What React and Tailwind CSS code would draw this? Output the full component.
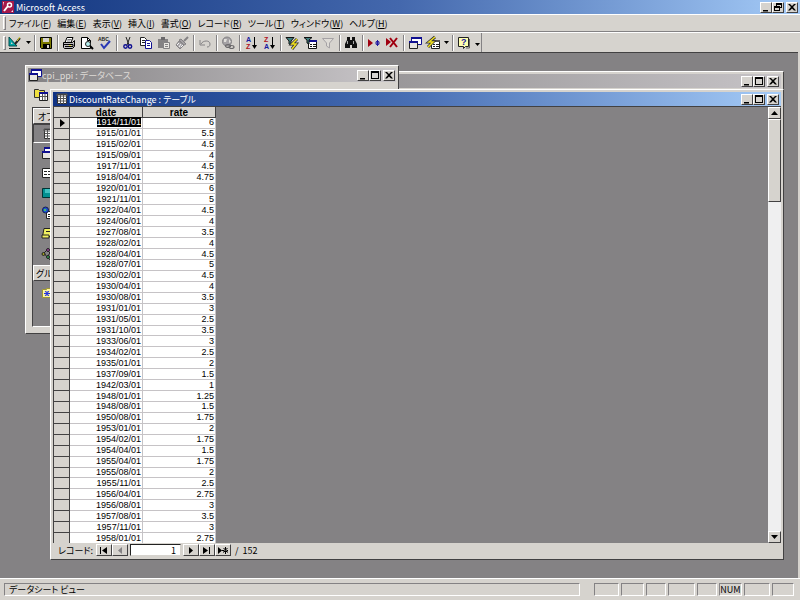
import React, { useState } from "react";

const rows = [
  ["1914/11/01", 6], ["1915/01/01", 5.5], ["1915/02/01", 4.5], ["1915/09/01", 4],
  ["1917/11/01", 4.5], ["1918/04/01", 4.75], ["1920/01/01", 6], ["1921/11/01", 5],
  ["1922/04/01", 4.5], ["1924/06/01", 4], ["1927/08/01", 3.5], ["1928/02/01", 4],
  ["1928/04/01", 4.5], ["1928/07/01", 5], ["1930/02/01", 4.5], ["1930/04/01", 4],
  ["1930/08/01", 3.5], ["1931/01/01", 3], ["1931/05/01", 2.5], ["1931/10/01", 3.5],
  ["1933/06/01", 3], ["1934/02/01", 2.5], ["1935/01/01", 2], ["1937/09/01", 1.5],
  ["1942/03/01", 1], ["1948/01/01", 1.25], ["1948/08/01", 1.5], ["1950/08/01", 1.75],
  ["1953/01/01", 2], ["1954/02/01", 1.75], ["1954/04/01", 1.5], ["1955/04/01", 1.75],
  ["1955/08/01", 2], ["1955/11/01", 2.5], ["1956/04/01", 2.75], ["1956/08/01", 3],
  ["1957/08/01", 3.5], ["1957/11/01", 3], ["1958/01/01", 2.75],
];

const menus = [
  ["ファイル", "F"], ["編集", "E"], ["表示", "V"], ["挿入", "I"], ["書式", "O"],
  ["レコード", "R"], ["ツール", "T"], ["ウィンドウ", "W"], ["ヘルプ", "H"],
];

const Icon = ({ children }) => (
  <svg viewBox="0 0 14 14" className="w-3.5 h-3.5 shrink-0 overflow-visible" fill="none" aria-hidden="true">
    {children}
  </svg>
);

const Letter = ({ x, y, size = 7, fill, children }) => (
  <text x={x} y={y} fontSize={size} fontWeight="bold" fontFamily="Liberation Sans, sans-serif" fill={fill}>
    {children}
  </text>
);

const icons = {
  design: (
    <Icon>
      <path d="M1 1v9h8z" fill="#00a5a5" stroke="#004a4a" />
      <path d="M3 6v2h2z" fill="#d6d3ce" />
      <path d="M12 2 7 8" stroke="#222" strokeWidth="2" />
      <path d="M12 1 9 5" stroke="#e8e030" />
      <path d="M1 12.5h11" stroke="#222" />
    </Icon>
  ),
  save: (
    <Icon>
      <path d="M1.5 1.5h11v11h-10l-1-1z" fill="#7b7900" stroke="#000" />
      <path d="M4 2h6v4H4z" fill="#d6d3ce" />
      <path d="M4 8h7v4H4z" fill="#000" />
      <path d="M8 9h2v3H8z" fill="#d6d3ce" />
    </Icon>
  ),
  print: (
    <Icon>
      <path d="M5 1.5h6l-2 5H3z" fill="#fff" stroke="#000" />
      <path d="M5.5 3.5h4M5 5h3.5" stroke="#777" />
      <path d="M1.5 6.5h9l2-2v6l-2 2h-8l-1-1z" fill="#bdbabd" stroke="#000" />
      <path d="M2 8.5h9v2H3" stroke="#000" />
      <path d="M7 9.5h2" stroke="#e8e030" />
    </Icon>
  ),
  preview: (
    <Icon>
      <path d="M1.5 1.5h6l3 3v8h-9z" fill="#fff" stroke="#000" />
      <path d="M7.5 1.5v3h3" stroke="#000" />
      <circle cx="8" cy="8" r="2.5" fill="#b8f0f0" stroke="#222" />
      <path d="m10 10 3 3" stroke="#000" strokeWidth="2" />
    </Icon>
  ),
  spell: (
    <Icon>
      <Letter x="0" y="5" size={5} fill="#222">ABC</Letter>
      <path d="m3 8 3 4 6-7" stroke="#2938b5" strokeWidth="2" />
    </Icon>
  ),
  cut: (
    <Icon>
      <path d="m5 1 3 8M9 1 6 9" stroke="#222" />
      <circle cx="4.5" cy="10.5" r="1.7" stroke="#101090" strokeWidth="1.4" />
      <circle cx="9" cy="10.5" r="1.7" stroke="#101090" strokeWidth="1.4" />
    </Icon>
  ),
  copy: (
    <Icon>
      <path d="M1.5 1.5h4l2 2v6h-6z" fill="#fff" stroke="#222" />
      <path d="M3 4.5h3M3 6.5h3" stroke="#222" />
      <path d="M6.5 4.5h4l2 2v6h-6z" fill="#fff" stroke="#101090" />
      <path d="M8 7.5h3M8 9.5h3" stroke="#101090" />
    </Icon>
  ),
  paste: (
    <Icon>
      <path d="M1 3h10v9H1z" fill="#848284" />
      <path d="M4 1h4v3H4z" fill="#6b696b" />
      <path d="M6.5 6.5h6v6h-6z" fill="#e8e6e2" stroke="#848284" />
      <path d="M8 8.5h3M8 10.5h3" stroke="#848284" />
    </Icon>
  ),
  brush: (
    <Icon>
      <path d="m13 1-4 4" stroke="#848284" strokeWidth="2" />
      <path d="m6 3 5 5-2 1-5-5z" fill="#a5a2a5" stroke="#848284" />
      <path d="M4 5 1 9l4 4 4-4z" fill="#a5a2a5" stroke="#848284" />
      <path d="m4 7-2 2m4-1-2 3m4-2-2 2" stroke="#f7f7f7" />
    </Icon>
  ),
  undo: (
    <Icon>
      <path d="M2 4v5h5M3 8c2-4 9-4 9 0 0 2-1 3-3 3" stroke="#848284" />
    </Icon>
  ),
  globe: (
    <Icon>
      <circle cx="6" cy="5.5" r="4.5" fill="#a5a2a5" stroke="#848284" />
      <path d="M3 3h3l-1 3H3zm5 0 2 3-2 1z" fill="#e0deda" />
      <ellipse cx="7" cy="10" rx="2.5" ry="1.5" stroke="#6b696b" strokeWidth="1.2" />
      <ellipse cx="10.5" cy="11" rx="2.5" ry="1.5" stroke="#6b696b" strokeWidth="1.2" />
    </Icon>
  ),
  sortAsc: (
    <Icon>
      <Letter x="2" y="6" fill="#1818a0">A</Letter>
      <Letter x="2" y="13" fill="#b01020">Z</Letter>
      <path d="M10.5 1v11" stroke="#000" />
      <path d="M8 9h5l-2.5 4z" fill="#000" />
    </Icon>
  ),
  sortDesc: (
    <Icon>
      <Letter x="2" y="6" fill="#b01020">Z</Letter>
      <Letter x="2" y="13" fill="#1818a0">A</Letter>
      <path d="M10.5 1v11" stroke="#000" />
      <path d="M8 9h5l-2.5 4z" fill="#000" />
    </Icon>
  ),
  filterSel: (
    <Icon>
      <path d="M1 1.5h8L6 5v4L4 8V5z" fill="#408080" stroke="#111" />
      <path d="m12 3-5 5h4l-4 5" stroke="#333" strokeWidth="3" />
      <path d="m12 3-5 5h4l-4 5" stroke="#f0e020" strokeWidth="1.5" />
    </Icon>
  ),
  filterForm: (
    <Icon>
      <path d="M5.5 4.5h8v8h-8z" fill="#fff" stroke="#111" />
      <path d="M5 4h9v2H5z" fill="#101090" />
      <path d="M7 8.5h2m1 0h3M7 10.5h2m1 0h3" stroke="#111" />
      <path d="M1 1.5h8L6 4v4L4 7V4z" fill="#408080" stroke="#111" />
    </Icon>
  ),
  filter: (
    <Icon>
      <path d="M1.5 2.5h11L8.5 7v5l-3-2V7z" fill="#dedbd6" stroke="#a5a2a5" />
    </Icon>
  ),
  find: (
    <Icon>
      <path d="M3 1h3v3h2V1h3v3l2 4v4H8V9H6v3H1V8l2-4z" fill="#111" />
      <path d="M3.5 5v3M9.5 5v3" stroke="#aaa" />
    </Icon>
  ),
  newRec: (
    <Icon>
      <path d="M1 3v8l5-4z" fill="#a00010" />
      <path d="M10.5 4v6M8 7h5M9 5l3 4M12 5 9 9" stroke="#2018a0" />
    </Icon>
  ),
  delRec: (
    <Icon>
      <path d="M1 2v8l5-4z" fill="#a00010" />
      <path d="m5 2 7 9M12 2l-7 9" stroke="#a00010" strokeWidth="2" />
    </Icon>
  ),
  dbWindow: (
    <Icon>
      <path d="M3.5 1.5h10v7h-10z" fill="#fff" stroke="#101090" />
      <path d="M3 1h11v2H3z" fill="#101090" />
      <path d="M1.5 5.5h8v7h-8z" fill="#e8e6e2" stroke="#222" />
      <path d="M1 5h9v2H1z" fill="#101090" />
    </Icon>
  ),
  newObj: (
    <Icon>
      <path d="M5.5 4.5h8v8h-8z" fill="#fff" stroke="#222" />
      <path d="M5 4h9v2H5z" fill="#555" />
      <path d="M7 8.5h2m1 0h3M7 10.5h2m1 0h3" stroke="#222" />
      <path d="M9 1 3 6h4l-5 5" stroke="#333" strokeWidth="3" />
      <path d="M9 1 3 6h4l-5 5" stroke="#f0e020" strokeWidth="1.5" />
    </Icon>
  ),
  help: (
    <Icon>
      <path d="M1.5 1.5h10v9h-3l-2 2v-2h-5z" fill="#ffffb0" stroke="#222" />
      <path d="M12.5 3v9H9" stroke="#666" />
      <Letter x="4" y="9" size={9} fill="#1818a0">?</Letter>
    </Icon>
  ),
  table: (
    <Icon>
      <path d="M2.5 2.5h9v9h-9z" fill="#fff" stroke="#333" />
      <path d="M2 2h10v2H2zM5.5 3v9M8.5 3v9M3 6.5h9M3 9h9" stroke="#555" />
    </Icon>
  ),
  form: (
    <Icon>
      <path d="M1.5 2.5h11v9h-11z" fill="#fff" stroke="#222" />
      <path d="M3 5.5h3M3 8.5h3m1-3h5m-5 3h5" stroke="#222" />
    </Icon>
  ),
  report: (
    <Icon>
      <path d="M1.5 2.5h11v9h-11z" fill="#009090" stroke="#033" />
      <path d="M4 3h7v4H4z" fill="#40c0c0" />
    </Icon>
  ),
  page: (
    <Icon>
      <path d="M5.5 5.5h7v7h-7z" fill="#fff" stroke="#222" />
      <circle cx="4.5" cy="4" r="3" fill="#2050d0" stroke="#102050" />
      <path d="M3 3h2v2H3z" fill="#40c060" />
      <path d="M7 8.5h4M7 10.5h4" stroke="#222" />
    </Icon>
  ),
  macro: (
    <Icon>
      <path d="M3 2.5h10l-3 8H1.5z" fill="#f0f060" stroke="#222" />
      <path d="M1 9h7v3H1z" fill="#f0f060" stroke="#222" />
      <path d="M5 5.5h6" stroke="#222" />
    </Icon>
  ),
  module: (
    <Icon>
      <path d="m3 6 3-3 3 3-3 4zM6 9l3 4 4-4" stroke="#222" />
      <circle cx="2.5" cy="7" r="1.5" fill="#a0a020" stroke="#222" />
      <circle cx="7" cy="3" r="1.5" fill="#a040a0" stroke="#222" />
      <circle cx="7" cy="10" r="1.5" fill="#30a050" stroke="#222" />
    </Icon>
  ),
  favorites: (
    <Icon>
      <path d="M1.5 3.5h4v-1h4v1h4v8h-12z" fill="#fff7a0" stroke="#a09830" />
      <path d="M6 5v5M3 7.5h6M4 5l4 5m0-5-4 5" stroke="#2030e0" />
    </Icon>
  ),
  open: (
    <Icon>
      <path d="M0.5 2.5h4l1 1h5v7h-10z" fill="#f0e040" stroke="#333" />
      <path d="M5.5 5.5h8v8h-8z" fill="#fff" stroke="#222" />
      <path d="M5 5h9v2H5z" fill="#101090" />
      <path d="M8.5 7v6M11 7v6M6 9.5h7" stroke="#555" />
    </Icon>
  ),
};

const toolGroups = [
  [["save", "上書き保存"]],
  [["print", "印刷"], ["preview", "印刷プレビュー"], ["spell", "スペル チェック"]],
  [["cut", "切り取り"], ["copy", "コピー"], ["paste", "貼り付け"], ["brush", "書式のコピー"]],
  [["undo", "元に戻す"]],
  [["globe", "ハイパーリンクの挿入"]],
  [["sortAsc", "昇順で並べ替え"], ["sortDesc", "降順で並べ替え"]],
  [["filterSel", "選択フィルタ"], ["filterForm", "フォーム フィルタ"], ["filter", "フィルタの実行"]],
  [["find", "検索"]],
  [["newRec", "新しいレコード"], ["delRec", "レコードの削除"]],
];

const ToolButton = ({ name, label }) => (
  <button aria-label={label} className="w-[18px] h-4 flex items-center justify-center">
    {icons[name]}
  </button>
);

const Separator = () => (
  <div className="w-[5px] h-4 flex justify-center shrink-0">
    <div className="w-0.5 h-full border-l border-l-[#848284] border-r border-r-white" />
  </div>
);

const DropArrow = ({ label }) => (
  <button aria-label={label} className="w-2 h-4 flex items-center justify-center">
    <svg viewBox="0 0 5 3" className="w-[5px] h-[3px]"><path d="M0 0h5L2.5 3z" /></svg>
  </button>
);

const Grip = () => (
  <div className="w-[3px] h-3.5 border border-t-white border-l-white border-r-[#848284] border-b-[#848284]" />
);

const controlPaths = {
  min: <path d="M2 7h5v1.5H2z" />,
  max: <path d="M1 0h8v8H1zM2 2v5h6V2z" fillRule="evenodd" />,
  restore: <path d="M3 0h6v5H7v3H1V3h2zM4 2v1h3v1h1V2zM2 5v2h4V5z" fillRule="evenodd" />,
  close: <path d="M1 1h2l2 2 2-2h2L6 4l3 3.5H7L5 5.5l-2 2H1L4 4z" />,
};

const ControlButton = ({ kind, label }) => (
  <button
    aria-label={label}
    className="w-3 h-[11px] bg-[#d6d3ce] flex items-center justify-center border border-t-white border-l-white border-r-[#424142] border-b-[#424142]"
  >
    <svg viewBox="0 0 10 9" className="w-2.5 h-[9px]">{controlPaths[kind]}</svg>
  </button>
);

const WindowControls = ({ restore }) => (
  <div className="flex shrink-0">
    <ControlButton kind="min" label="最小化" />
    <ControlButton kind={restore ? "restore" : "max"} label={restore ? "元に戻す" : "最大化"} />
    <div className="ml-0.5 flex">
      <ControlButton kind="close" label="閉じる" />
    </div>
  </div>
);

const NavButton = ({ label, disabled, onClick, children }) => (
  <button
    aria-label={label}
    disabled={disabled}
    onClick={onClick}
    className="w-4 h-3 flex items-center justify-center border border-t-white border-l-white border-r-[#424142] border-b-[#424142] text-black disabled:text-[#848284]"
  >
    <svg viewBox="0 0 10 7" className="w-2.5 h-[7px]" fill="currentColor">{children}</svg>
  </button>
);

const ScrollButton = ({ label, d }) => (
  <button
    aria-label={label}
    className="h-3 shrink-0 bg-[#d6d3ce] flex items-center justify-center border border-t-white border-l-white border-r-[#424142] border-b-[#424142]"
  >
    <svg viewBox="0 0 7 4" className="w-[7px] h-1"><path d={d} /></svg>
  </button>
);

const Pane = ({ className, children }) => (
  <div className={`h-[13px] border border-t-[#848284] border-l-[#848284] border-r-white border-b-white ${className}`}>
    {children}
  </div>
);

const DatabaseWindow = () => (
  <section className="absolute left-[25px] top-3 w-[374px] h-[269px] flex flex-col bg-[#d6d3ce] p-0.5 border border-t-white border-l-white border-r-[#424142] border-b-[#424142]">
    <div className="h-[14px] flex items-center justify-between pr-px bg-linear-to-r from-[#848284] to-[#c9c6c9] text-[#dedbd6]">
      <div className="flex items-center">
        {icons.dbWindow}
        <h2>cpi_ppi : データベース</h2>
      </div>
      <WindowControls />
    </div>
    <div className="h-6 flex items-center px-1.5 mb-px">
      <button aria-label="開く">{icons.open}</button>
    </div>
    <div className="flex-1 ml-1 mr-1 mb-1 bg-[#848284] border border-t-[#424142] border-l-[#424142] border-white">
      <div className="w-[90px] flex flex-col">
        <div className="h-4 px-1 flex items-center bg-[#d6d3ce] border border-white border-b-[#424142]">オブジェクト</div>
        <button aria-label="テーブル" className="h-[19px] px-2 flex items-center border border-t-[#424142] border-l-[#424142] border-white">
          {icons.table}
        </button>
        <button aria-label="クエリ" className="h-5 px-2 flex items-center">{icons.dbWindow}</button>
        <button aria-label="フォーム" className="h-5 px-2 flex items-center">{icons.form}</button>
        <button aria-label="レポート" className="h-5 px-2 flex items-center">{icons.report}</button>
        <button aria-label="ページ" className="h-5 px-2 flex items-center">{icons.page}</button>
        <button aria-label="マクロ" className="h-5 px-2 flex items-center">{icons.macro}</button>
        <button aria-label="モジュール" className="h-[22px] px-2 flex items-center">{icons.module}</button>
        <div className="h-4 px-0.5 flex items-center bg-[#d6d3ce] border border-white border-b-[#424142]">グループ</div>
        <button aria-label="お気に入り" className="h-6 px-2 flex items-center">{icons.favorites}</button>
      </div>
    </div>
  </section>
);

const TableWindow = () => {
  const [current, setCurrent] = useState(1);

  return (
    <section className="relative flex-1 min-h-0 flex flex-col ml-[50px] mr-3.5 mt-9 mb-[18px] p-0.5 bg-[#d6d3ce] border border-t-white border-l-white border-r-[#424142] border-b-[#424142]">
      <div className="h-[14px] shrink-0 flex items-center justify-between px-0.5 bg-linear-to-r from-[#0f3283] via-[#4a70b5] to-[#a5cbf7] text-white">
        <div className="flex items-center">
          {icons.table}
          <h2>DiscountRateChange : テーブル</h2>
        </div>
        <WindowControls />
      </div>

      <div className="flex-1 min-h-0 flex border-t border-t-[#424142] border-l border-l-[#424142]">
        <div className="flex-1 min-w-0 overflow-hidden bg-[#848284]">
          <table className="w-[162px] h-[437px] table-fixed border-separate border-spacing-0 leading-[9px] text-right font-['Liberation_Sans',sans-serif]">
            <colgroup>
              <col className="w-4" />
              <col className="w-[73px]" />
              <col className="w-[73px]" />
            </colgroup>
            <thead>
              <tr className="h-[11px] bg-[#d6d3ce] text-center text-[10px]">
                <th className="p-0 border-r border-b border-[#424142]" />
                <th className="p-0 border-r border-b border-[#424142]">date</th>
                <th className="p-0 border-r border-b border-[#424142]">rate</th>
              </tr>
            </thead>
            <tbody>
              {rows.map(([date, rate], i) => (
                <tr key={date} className="bg-white">
                  <td className="p-0 bg-[#d6d3ce] border-r border-b border-[#424142]">
                    {i === current - 1 && (
                      <svg viewBox="0 0 5 8" className="w-[5px] h-2 ml-1.5"><path d="M0 0v8l5-4z" /></svg>
                    )}
                  </td>
                  <td className="p-0 pr-px border-r border-b border-[#c6c3c6]">
                    <span className={i === current - 1 ? "bg-black text-white" : ""}>{date}</span>
                  </td>
                  <td className="p-0 pr-px border-r border-b border-[#c6c3c6]">{rate}</td>
                </tr>
              ))}
            </tbody>
          </table>
        </div>
        <div className="w-[13px] shrink-0 flex flex-col bg-[#efeff0]">
          <ScrollButton label="上へスクロール" d="M0 4h7L3.5 0z" />
          <div className="h-[83px] bg-[#d6d3ce] border border-t-white border-l-white border-r-[#424142] border-b-[#424142]" />
          <div className="flex-1" />
          <ScrollButton label="下へスクロール" d="M0 0h7L3.5 4z" />
        </div>
      </div>

      <div className="h-3.5 shrink-0 flex items-center pl-[5px]">
        <label htmlFor="record" className="w-[38px] whitespace-nowrap">レコード:</label>
        <NavButton label="最初のレコード" onClick={() => setCurrent(1)}>
          <path d="M1 0h1v7H1zM8 0v7L3 3.5z" />
        </NavButton>
        <NavButton label="前のレコード" disabled={current === 1} onClick={() => setCurrent(current - 1)}>
          <path d="M7 0v7L3 3.5z" />
        </NavButton>
        <input
          id="record"
          value={current}
          onChange={(e) => setCurrent(Number(e.target.value) || 1)}
          className="w-[51px] h-3 mx-0.5 px-1 text-right bg-white border border-t-[#222] border-l-[#222] border-[#d6d3ce]"
        />
        <NavButton label="次のレコード" onClick={() => setCurrent(current + 1)}>
          <path d="M3 0v7l4-3.5z" />
        </NavButton>
        <NavButton label="最後のレコード" onClick={() => setCurrent(152)}>
          <path d="M1 0v7l5-3.5zM7 0h1v7H7z" />
        </NavButton>
        <NavButton label="新しいレコード">
          <path d="M0 0v7l4-3.5zM7 0h1v7H7zM4 3h7v1H4zM5 1l5 5v-1L6 1zM9 1 5 5v1l5-5z" />
        </NavButton>
        <span className="ml-1 whitespace-pre">/  152</span>
      </div>
    </section>
  );
};

const App = () => {
  return (
    <div className="h-screen flex flex-col overflow-hidden bg-[#d6d3ce] text-black text-[9px] leading-[11px] font-['Noto_Sans_CJK_JP',sans-serif] [font-feature-settings:'palt']">
      <header className="h-3.5 shrink-0 flex items-center justify-between px-0.5 bg-linear-to-r from-[#12357f] via-[#4468ad] to-[#a5cbf7] text-white">
        <div className="flex items-center gap-0.5">
          <svg viewBox="0 0 12 12" className="w-3 h-3">
            <path d="M0 0h12v12H0z" fill="#a5184a" />
            <path d="M1 1h10v10H1z" fill="#f7e7ef" />
            <path d="M2 1h9v8l-2 2H1V5z" fill="#a5184a" />
            <circle cx="7.5" cy="4" r="2" fill="none" stroke="#fff" strokeWidth="1.5" />
            <path d="m6 5-4 5" stroke="#fff" strokeWidth="2" />
          </svg>
          <h1>Microsoft Access</h1>
        </div>
        <WindowControls restore />
      </header>

      <nav className="h-[18px] shrink-0 flex items-center pl-[3px] border-t border-t-white border-b border-b-[#848284]">
        <Grip />
        <div className="flex">
          {menus.map(([name, key]) => (
            <button key={key} className="px-[3px] whitespace-nowrap">
              {name}(<u>{key}</u>)
            </button>
          ))}
        </div>
      </nav>

      <div className="h-5 shrink-0 flex items-center border-t border-t-white">
        <div className="h-full flex items-center pl-[3px] border-r border-r-[#848284]">
          <Grip />
          <ToolButton name="design" label="表示" />
          <DropArrow label="表示の選択" />
          {toolGroups.map((group) => (
            <React.Fragment key={group[0][0]}>
              <Separator />
              {group.map(([name, label]) => (
                <ToolButton key={name} name={name} label={label} />
              ))}
            </React.Fragment>
          ))}
          <Separator />
          <ToolButton name="dbWindow" label="データベース ウィンドウ" />
          <ToolButton name="newObj" label="新しいオブジェクト" />
          <DropArrow label="新しいオブジェクトの選択" />
          <Separator />
          <ToolButton name="help" label="ヘルプ" />
          <div className="self-end">
            <DropArrow label="その他のボタン" />
          </div>
        </div>
      </div>

      <main className="relative flex-1 min-h-0 flex flex-col mr-0.5 bg-[#848284] border-t border-t-[#424142]">
        <section className="absolute left-[200px] right-3.5 top-[18px] h-[300px] p-0.5 bg-[#d6d3ce] border border-t-white border-l-white border-r-[#424142] border-b-[#424142]">
          <div className="h-[14px] flex items-center justify-end px-0.5 bg-linear-to-r from-[#848284] to-[#c6c3c6]">
            <WindowControls />
          </div>
        </section>
        <DatabaseWindow />
        <TableWindow />
      </main>

      <footer className="h-[22px] shrink-0 flex items-center gap-0.5 pl-1 pr-1.5 border-t border-t-white">
        <Pane className="flex-1 pl-1 mr-3">データシート ビュー</Pane>
        <Pane className="w-[25px]" />
        <Pane className="w-[23px]" />
        <Pane className="w-5" />
        <Pane className="w-[27px]" />
        <Pane className="w-5" />
        <Pane className="w-[23px] text-center">NUM</Pane>
        <Pane className="w-[26px]" />
        <Pane className="w-[22px]" />
      </footer>
    </div>
  );
};

export default App;
